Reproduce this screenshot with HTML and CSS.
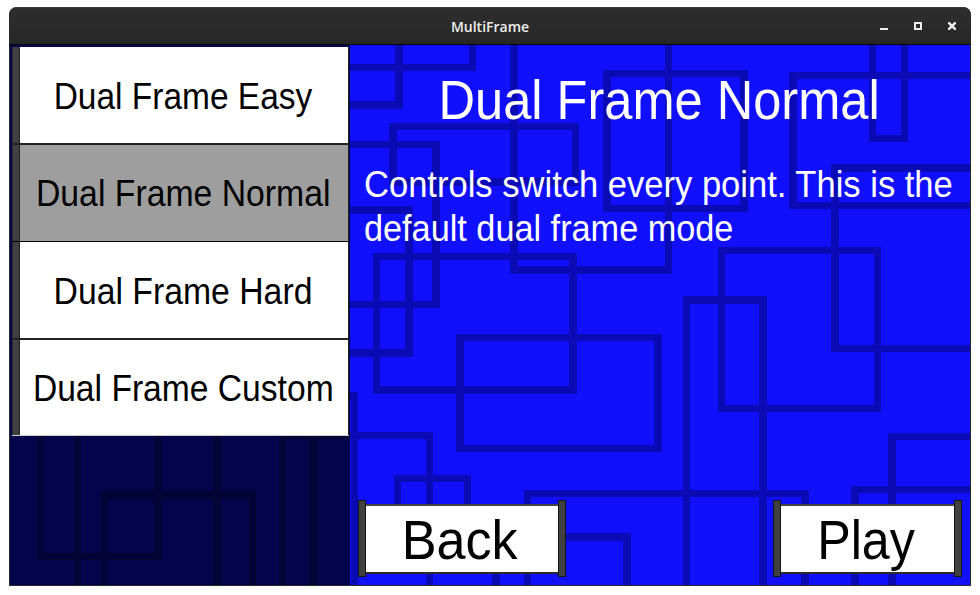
FILE: index.html
```html
<!DOCTYPE html>
<html lang="en">
<head>
<meta charset="utf-8">
<title>MultiFrame</title>
<link rel="stylesheet" href="styles.css">
</head>
<body>
<div class="window">
  <header class="titlebar">
    <span class="spacer"></span>
    <h1 class="window-title">MultiFrame</h1>
    <div class="controls">
      <svg width="8" height="8" viewBox="0 0 8 8"><path d="M0 6h8v2H0z"/></svg>
      <svg width="8" height="8" viewBox="0 0 8 8"><path fill-rule="evenodd" d="M0 0h8v8H0zM2 2v4h4V2z"/></svg>
      <svg width="8" height="8" viewBox="0 0 8 8"><path d="M0 0l8 8M8 0l-8 8" stroke="#eeeeec" stroke-width="2.4"/></svg>
    </div>
  </header>
  <main class="stage">
    <svg class="pattern" width="960" height="540" viewBox="10 45 960 540" shape-rendering="crispEdges">
      <path d="M395 45h8v64h-8zM350 101h53v8h-53z
        M469 45h7v26h-7zM350 64h126v7h-126z
        M510 45h8v229h-8zM510 266h162v8h-162zM665 45h7v229h-7z
        M389 123h190v7h-190zM389 123h8v63h-8zM572 123h7v63h-7zM389 178h190v8h-190z
        M350 141h90v7h-90zM432 141h8v167h-8zM350 301h90v7h-90z
        M350 206h63v8h-63zM405 206h8v151h-8zM350 349h63v8h-63z
        M373 253h204v7h-204zM373 253h7v141h-7zM569 253h8v141h-8zM373 386h204v8h-204z
        M603 70h145v7h-145zM603 70h8v142h-8zM740 70h8v142h-8zM603 205h145v7h-145z
        M456 334h206v7h-206zM456 334h8v118h-8zM654 334h8v118h-8zM456 445h206v7h-206z
        M340 392h18v8h-18zM351 392h7v193h-7z
        M279 432h154v7h-154zM279 432h7v153h-7zM426 432h7v153h-7z
        M394 475h77v7h-77zM394 475h7v60h-7zM464 475h7v60h-7z
        M524 490h285v7h-285zM524 490h7v95h-7zM801 490h8v95h-8z
        M492 533h139v8h-139zM492 533h8v52h-8zM623 533h8v52h-8z
        M869 45h7v97h-7zM901 45h7v97h-7zM869 135h39v7h-39z
        M789 72h181v7h-181zM789 72h8v137h-8zM789 202h181v7h-181z
        M831 164h139v8h-139zM831 164h8v188h-8zM831 345h139v7h-139z
        M718 247h163v7h-163zM718 247h7v165h-7zM874 247h7v165h-7zM718 405h163v7h-163z
        M683 296h84v8h-84zM683 296h7v289h-7zM759 296h8v289h-8z
        M888 433h82v7h-82zM888 433h8v152h-8z
        M851 486h119v7h-119zM851 486h8v99h-8z
        M37 400h7v160h-7zM154 400h8v160h-8zM37 553h125v7h-125z
        M74 400h7v185h-7zM101 491h155v8h-155zM101 491h7v94h-7zM249 491h7v94h-7z
        M213 400h8v185h-8zM309 400h8v185h-8z"/>
    </svg>
    <nav class="sidebar">
      <button class="mode"><span class="label easy">Dual Frame Easy</span></button>
      <button class="mode selected"><span class="label">Dual Frame Normal</span></button>
      <button class="mode"><span class="label">Dual Frame Hard</span></button>
      <button class="mode"><span class="label custom">Dual Frame Custom</span></button>
    </nav>
    <section class="detail">
      <h2 class="heading"><span class="label">Dual Frame Normal</span></h2>
      <p class="description"><span class="line">Controls switch every point. This is the</span> <span class="line last">default dual frame mode</span></p>
      <div class="actions">
        <button class="action back"><span class="face"><span class="label">Back</span></span></button>
        <button class="action play"><span class="face"><span class="label">Play</span></span></button>
      </div>
    </section>
  </main>
</div>
</body>
</html>
```
FILE: styles.css
```css
* { box-sizing: border-box; }

body {
  margin: 0;
  padding: 7px 9px 9px;
  background: #fff;
  font-family: "Liberation Sans", Arial, sans-serif;
}

h1, h2, p { margin: 0; font-weight: normal; }

button {
  margin: 0;
  padding: 0;
  border: 0;
  background: none;
  color: #000;
  font: inherit;
}

.window {
  width: 962px;
  height: 579px;
  border-radius: 8px 8px 0 0;
  background: #2b2b2b;
  overflow: hidden;
}

.titlebar {
  display: grid;
  grid-template-columns: 1fr auto 1fr;
  align-items: center;
  height: 38px;
  padding: 0 15px;
  background: linear-gradient(#2e2e2e, #262626);
  border-top: 1px solid #3a3a3a;
  border-bottom: 1px solid #070707;
}

.window-title {
  padding-top: 2px;
  color: #eeeeec;
  font: 600 14px/20px "Open Sans", sans-serif;
}

.controls {
  display: flex;
  justify-content: flex-end;
  gap: 26px;
  fill: #eeeeec;
}

.stage {
  position: relative;
  display: flex;
  width: 960px;
  height: 540px;
  margin: 0 1px;
  background: #1010ff;
}

.pattern {
  position: absolute;
  inset: 0;
  fill: #0b0bb5;
}

.sidebar {
  position: relative;
  display: grid;
  grid-template-rows: 98px 97px 98px 96px;
  align-content: start;
  width: 340px;
  padding: 2px 1px 0 2px;
  background: rgba(0, 0, 0, 0.7);
}

.mode {
  --face: #fff;
  display: flex;
  align-items: center;
  justify-content: center;
  padding: 2px 2px 1px 7px;
  background: linear-gradient(90deg, #2b2b2b 1px, #404040 1px 7px, #222 7px 8px, var(--face) 8px calc(100% - 1px), #222 calc(100% - 1px));
  box-shadow: inset 0 -2px #222;
  font-size: 36.5px;
  white-space: nowrap;
}

.mode.selected {
  --face: #9e9e9e;
  box-shadow: inset 0 -1px #000;
}

.mode:last-child {
  box-shadow: inset 0 -1px #ccc;
}

.label {
  display: inline-block;
  transform: scaleX(0.925);
  white-space: nowrap;
}

.easy { transform: scaleX(0.917); }
.custom { transform: scaleX(0.921); }

.detail {
  position: relative;
  display: flex;
  flex-direction: column;
  width: 620px;
  padding: 27px 8px 8px;
  color: #fff;
}

.heading {
  padding-right: 1px;
  font-size: 55.5px;
  line-height: 56px;
  text-align: center;
}

.heading .label { transform: scaleX(0.911); }

.description {
  margin: 35px 0 0 6px;
  font-size: 36.75px;
  line-height: 44px;
  white-space: nowrap;
}

.line {
  display: block;
  width: max-content;
  transform: scaleX(0.94);
  transform-origin: left;
}

.line.last { transform: scaleX(0.932); }

.actions {
  display: flex;
  justify-content: space-between;
  margin-top: auto;
}

.action {
  display: grid;
  grid-template-columns: 8px 1fr 8px;
  height: 77px;
  font-size: 55.5px;
}

.action::before,
.action::after {
  content: "";
  background: #404040;
  border: 1px solid #151515;
}

.face {
  display: flex;
  align-items: center;
  justify-content: center;
  height: 70px;
  margin-top: 4px;
  padding: 2px 4px 0 0;
  background: #fff;
  border-top: 2px solid #444;
  border-bottom: 2px solid #2b2b2b;
}

.back { width: 208px; }
.play { width: 189px; }
.back .label { transform: scaleX(0.94); }
.play .label { transform: scaleX(0.905); }
```
